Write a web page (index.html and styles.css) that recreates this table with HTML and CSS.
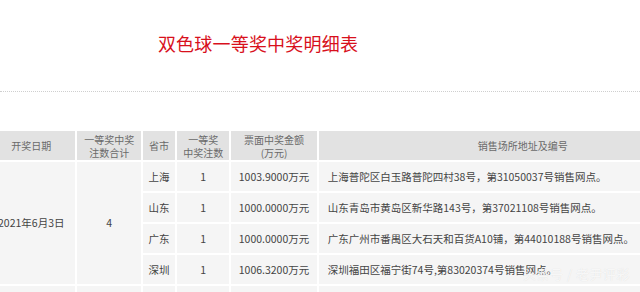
FILE: index.html
```html
<!DOCTYPE html>
<html lang="zh-CN">
<head>
<meta charset="utf-8">
<title>双色球一等奖中奖明细表</title>
<link rel="stylesheet" href="styles.css">
</head>
<body>
<div class="page">
  <div class="title-wrap">
    <h1 class="title">双色球一等奖中奖明细表</h1>
  </div>
  <div class="divider"></div>
  <table class="detail">
    <colgroup>
      <col class="c-date"><col class="c-total"><col class="c-prov"><col class="c-num"><col class="c-amt"><col class="c-addr">
    </colgroup>
    <thead>
      <tr>
        <th>开奖日期</th>
        <th>一等奖中奖<br>注数合计</th>
        <th>省市</th>
        <th>一等奖<br>中奖注数</th>
        <th>票面中奖金额<br>(万元)</th>
        <th>销售场所地址及编号</th>
      </tr>
    </thead>
    <tbody>
      <tr>
        <td rowspan="4">2021年6月3日</td>
        <td rowspan="4">4</td>
        <td>上海</td>
        <td>1</td>
        <td>1003.9000万元</td>
        <td class="addr">上海普陀区白玉路普陀四村38号，第31050037号销售网点。</td>
      </tr>
      <tr>
        <td>山东</td>
        <td>1</td>
        <td>1000.0000万元</td>
        <td class="addr">山东青岛市黄岛区新华路143号，第37021108号销售网点。</td>
      </tr>
      <tr>
        <td>广东</td>
        <td>1</td>
        <td>1000.0000万元</td>
        <td class="addr">广东广州市番禺区大石天和百货A10铺，第44010188号销售网点。</td>
      </tr>
      <tr>
        <td>深圳</td>
        <td>1</td>
        <td>1006.3200万元</td>
        <td class="addr">深圳福田区福宁街74号,第83020374号销售网点。</td>
      </tr>
      <tr>
        <td></td><td></td><td></td><td></td><td></td><td></td>
      </tr>
    </tbody>
  </table>
  <div class="watermark">头条号 / 老尹评彩</div>
</div>
</body>
</html>
```

FILE: styles.css
```css
html, body {
  margin: 0;
  padding: 0;
  background: #ffffff;
  overflow: hidden;
}

body {
  font-family: "Noto Sans CJK SC", "Microsoft YaHei", sans-serif;
  font-size: 10px;
  color: #333333;
}

.page {
  position: relative;
  width: 640px;
  height: 292px;
  overflow: hidden;
}

.title-wrap {
  width: 516px;
  padding-top: 30px;
  height: 30px;
  text-align: center;
}

.title {
  margin: 0;
  font-size: 18px;
  font-weight: 400;
  line-height: 26px;
  color: #d8101c;
  letter-spacing: 0.2px;
}

.divider {
  margin-top: 31px;
  border-top: 1px dotted #cfcfcf;
  height: 0;
}

.detail {
  margin-top: 37px;
  margin-left: -15px;
  border-collapse: separate;
  border-spacing: 2px;
  table-layout: fixed;
  width: 744px;
}

.c-date { width: 88px; }
.c-total { width: 63px; }
.c-prov { width: 32px; }
.c-num { width: 52px; }
.c-amt { width: 85px; }
.c-addr { width: 406px; }

.detail th {
  background: #e2e2e2;
  color: #6a6a6a;
  font-weight: 400;
  font-size: 10px;
  line-height: 13px;
  height: 29px;
  padding: 0;
  text-align: center;
  vertical-align: middle;
}

.detail td {
  background: #f5f5f5;
  color: #444444;
  font-size: 10.5px;
  line-height: 14px;
  height: 29px;
  padding: 0;
  text-align: center;
  vertical-align: middle;
  white-space: nowrap;
}

.detail td.addr {
  text-align: left;
  padding-left: 9px;
}

.watermark {
  position: absolute;
  right: 10px;
  top: 264px;
  font-size: 13px;
  color: rgba(255, 255, 255, 0.8);
  text-shadow: 0 0 1px rgba(0, 0, 0, 0.12);
  letter-spacing: 0.5px;
  white-space: nowrap;
}
```
